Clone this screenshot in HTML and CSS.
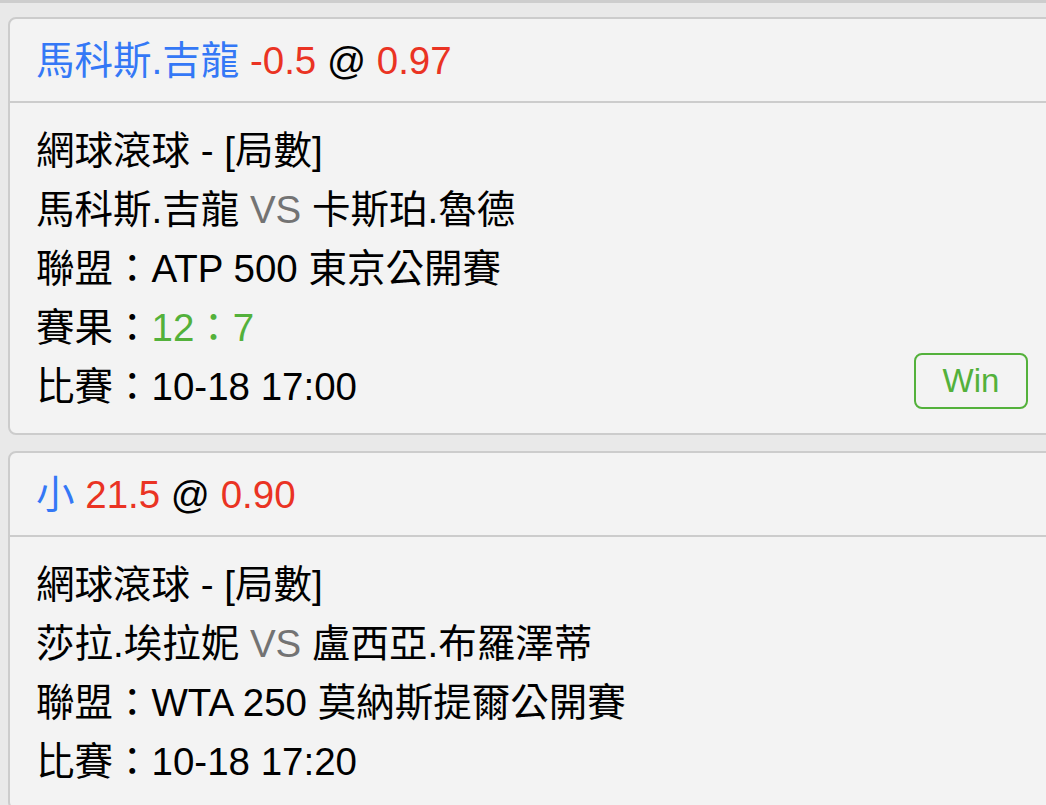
FILE: index.html
```html
<!DOCTYPE html>
<html lang="zh-Hant">
<head>
<meta charset="utf-8">
<title>注單</title>
<link rel="stylesheet" href="styles.css">
</head>
<body>
<div class="page">
  <div class="top-bar"></div>
  <div class="list">
    <div class="card">
      <div class="card-head">
        <span class="blue">馬科斯.吉龍</span> <span class="red">-0.5</span> @ <span class="red">0.97</span>
      </div>
      <div class="card-body">
        <div class="line">網球滾球 - [局數]</div>
        <div class="line">馬科斯.吉龍 <span class="grey">VS</span> 卡斯珀.魯德</div>
        <div class="line">聯盟：ATP 500 東京公開賽</div>
        <div class="line">賽果：<span class="green">12：7</span></div>
        <div class="line row">
          <span>比賽：10-18 17:00</span>
          <span class="badge">Win</span>
        </div>
      </div>
    </div>
    <div class="card">
      <div class="card-head">
        <span class="blue">小</span> <span class="red">21.5</span> @ <span class="red">0.90</span>
      </div>
      <div class="card-body">
        <div class="line">網球滾球 - [局數]</div>
        <div class="line">莎拉.埃拉妮 <span class="grey">VS</span> 盧西亞.布羅澤蒂</div>
        <div class="line">聯盟：WTA 250 莫納斯提爾公開賽</div>
        <div class="line">比賽：10-18 17:20</div>
      </div>
    </div>
  </div>
</div>
</body>
</html>
```
FILE: styles.css
```css
html, body {
  margin: 0;
  padding: 0;
  overflow: hidden;
  background: #e9e9e9;
}
body {
  font-family: "Liberation Sans", "Noto Sans CJK TC", sans-serif;
  color: #000;
}
.page {
  width: 1046px;
  height: 805px;
  overflow: hidden;
}
.top-bar {
  height: 3px;
  background: #cdcdcd;
}
.list {
  display: flex;
  flex-direction: column;
  gap: 16px;
  padding: 14px 0 0 8px;
  width: 1048px;
}
.card {
  background: #f3f3f3;
  border: 2px solid #cccccc;
  border-radius: 8px;
  flex-shrink: 0;
}
.card-head {
  font-size: 38.5px;
  line-height: 58px;
  padding: 13px 26px 11px;
  border-bottom: 2px solid #cccccc;
  white-space: nowrap;
}
.card-body {
  padding: 18px 26px 17px;
  font-size: 38.5px;
  line-height: 59px;
}
.line {
  height: 59px;
  white-space: nowrap;
}
.row {
  display: flex;
  justify-content: space-between;
  align-items: flex-start;
}
.blue { color: #3478f6; }
.red { color: #ea3323; }
.grey { color: #737373; }
.green { color: #53b13b; }
.badge {
  box-sizing: border-box;
  width: 114px;
  height: 56px;
  margin-top: -4px;
  border: 2px solid #53b13b;
  border-radius: 8px;
  color: #53b13b;
  font-size: 33px;
  line-height: 52px;
  text-align: center;
}
```
